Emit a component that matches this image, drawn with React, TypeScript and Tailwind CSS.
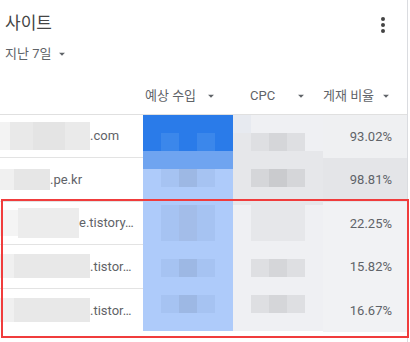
import React from 'react'

const font = { fontFamily: 'Roboto, "Noto Sans CJK KR", sans-serif' }

// mosaic palette for the redacted revenue / cpc columns
const cell: Record<string, string> = {
  B: 'bg-[#2a7be9]',
  b: 'bg-[#3b87eb]',
  M: 'bg-[#6fa4f0]',
  L: 'bg-[#aecbfa]',
  l: 'bg-[#a6c3f2]',
  d: 'bg-[#9db8e4]',
  e: 'bg-[#a3bde9]',
  x: 'bg-[#e7eaf0]',
  w: 'bg-[#eff0f3]',
  g: 'bg-[#e6e7ea]',
  h: 'bg-[#dedfe2]',
  k: 'bg-[#d5d6d9]',
  K: 'bg-[#cacbce]',
}

const mosaic = [
  'BBBBBxwwww',
  'BbBbBghkhw',
  'MMMMMggggg',
  'LldlLgkKkg',
  'LLLLLggggg',
  'LlelLwgggw',
  'LlelLwgggw',
  'LLLLLwwwww',
  'LldlLwhkhw',
  'LLLLLwwwww',
  'LldlLwhkhw',
  'LLLLLwwwww',
]

const sites = [
  {
    blocks: [
      'w-[10px] h-[28px] bg-[#f3f3f3]',
      'w-[23px] h-[28px] bg-[#e9e9e9]',
      'w-[32px] h-[28px] bg-[#e4e4e4]',
      'w-[25px] h-[28px] bg-[#eaeaea]',
    ],
    text: '.com',
  },
  {
    blocks: ['w-[14px] h-[21px] bg-[#f0f0f0]', 'w-[36px] h-[21px] bg-[#e6e6e6]'],
    text: '.pe.kr',
  },
  {
    blocks: ['w-[18px] h-[26px] bg-[#f4f4f4]', 'w-[61px] h-[30px] bg-[#ececec]'],
    text: 'e.tistory…',
  },
  {
    blocks: ['w-[14px] h-[24px] bg-[#f0f0f0]', 'w-[76px] h-[24px] bg-[#e8e8e8]'],
    text: '.tistor…',
  },
  {
    blocks: ['w-[14px] h-[24px] bg-[#f0f0f0]', 'w-[76px] h-[24px] bg-[#e8e8e8]'],
    text: '.tistor…',
  },
]

const ratios = [
  { v: '93.02%', bg: 'bg-[#eff0f2]' },
  { v: '98.81%', bg: 'bg-[#e4e5e8]' },
  { v: '22.25%', bg: 'bg-[#f1f2f4]' },
  { v: '15.82%', bg: 'bg-[#f1f2f4]' },
  { v: '16.67%', bg: 'bg-[#f1f2f4]' },
]

function Caret({ className = '' }: { className?: string }) {
  return (
    <svg className={`w-[14px] h-[14px] ${className}`} viewBox="0 0 24 24" fill="#5f6368">
      <path d="M7 10l5 5 5-5z" />
    </svg>
  )
}

export default function App() {
  return (
    <div className="relative w-[410px] h-[342px] bg-white overflow-hidden" style={font}>
      <div className="w-[408px] h-full border-r border-[#dadce0]">
        {/* Title */}
        <div className="pt-[11px] pl-[5px] pr-[12px] flex justify-between items-center h-[35px]">
          <span className="text-[17px] leading-[24px] text-[#444]">사이트</span>
          <svg className="w-[24px] h-[24px]" viewBox="0 0 24 24" fill="#444">
            <circle cx="12" cy="8" r="2" />
            <circle cx="12" cy="14" r="2" />
            <circle cx="12" cy="20" r="2" />
          </svg>
        </div>

        {/* Date range */}
        <div className="mt-[9px] pl-[5px] h-[20px] flex items-center text-[13px] text-[#5f6368]">
          <span>지난 7일</span>
          <Caret className="ml-[4px]" />
        </div>

        {/* Column headers */}
        <div className="mt-[22px] h-[29px] flex text-[13px] text-[#5f6368] border-b border-[#e0e0e0]">
          <div className="w-[143px]" />
          <div className="w-[90px] h-[20px] flex items-center pl-[2px]">
            <span>예상 수입</span>
            <Caret className="ml-[8px]" />
          </div>
          <div className="w-[90px] h-[20px] flex items-center pl-[17px]">
            <span>CPC</span>
            <Caret className="ml-[19px]" />
          </div>
          <div className="flex-1 h-[20px] flex items-center">
            <span>게재 비율</span>
            <Caret className="ml-[5px]" />
          </div>
        </div>

        {/* Table */}
        <div className="flex h-[217px]">
          <div className="w-[143px] flex flex-col">
            {sites.map((s, i) => (
              <div
                key={i}
                className={`h-[43.5px] flex items-center overflow-hidden text-[13px] text-[#5f6368] ${
                  i < 4 ? 'border-b border-[#e3e3e3]' : ''
                }`}
              >
                {s.blocks.map((b, j) => (
                  <div key={j} className={`shrink-0 ${b}`} />
                ))}
                <span className="whitespace-nowrap">{s.text}</span>
              </div>
            ))}
          </div>

          <div className="w-[180px] h-[216px] grid grid-cols-[repeat(10,18px)] grid-rows-[repeat(12,18px)]">
            {mosaic.flatMap((row, r) =>
              row.split('').map((c, k) => <div key={`${r}-${k}`} className={cell[c]} />)
            )}
          </div>

          <div className="flex-1 flex flex-col">
            {ratios.map((r) => (
              <div
                key={r.v}
                className={`h-[43.5px] flex items-center justify-end pr-[15px] text-[13px] text-[#5f6368] ${r.bg}`}
              >
                {r.v}
              </div>
            ))}
          </div>
        </div>
      </div>

      {/* highlight box */}
      <div className="absolute left-[1px] top-[199px] w-[408px] h-[139px] border-2 border-[#f03c3c]" />
    </div>
  )
}
